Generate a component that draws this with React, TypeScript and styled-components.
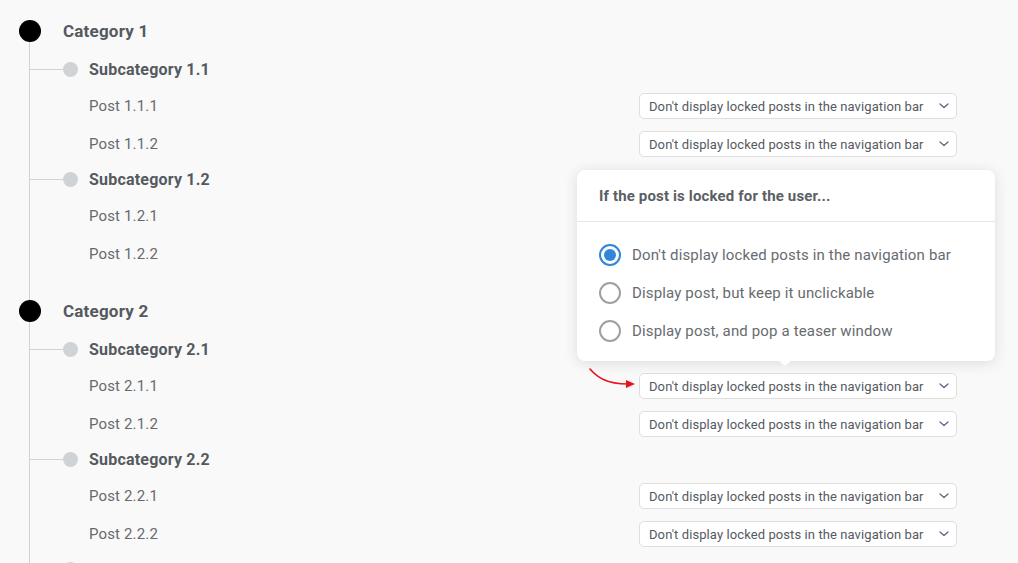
import React from 'react';
import styled, { createGlobalStyle } from 'styled-components';

const GlobalStyle = createGlobalStyle`
  html, body {
    margin: 0;
    padding: 0;
    height: 100%;
    overflow: hidden;
    background: #f9f9f9;
  }
  body {
    font-family: Roboto, 'Liberation Sans', sans-serif;
    color: #555;
  }
`;

const Page = styled.div`
  padding: 10px 61px 0 19px;
`;

const Tree = styled.div`
  position: relative;
  display: flex;
  flex-direction: column;

  &::before {
    content: '';
    position: absolute;
    left: 10px;
    top: 21px;
    bottom: -200px;
    width: 1px;
    background: #cfd1d4;
  }
`;

const CategoryBlock = styled.div`
  display: flex;
  flex-direction: column;
  & + & {
    margin-top: 18px;
  }
`;

const CategoryRow = styled.div`
  display: flex;
  align-items: center;
  gap: 22px;
  height: 42px;
`;

const CategoryDot = styled.span`
  position: relative;
  width: 22px;
  height: 22px;
  border-radius: 50%;
  background: #000;
  flex: none;
`;

const CategoryTitle = styled.span`
  font-size: 17px;
  font-weight: 700;
  letter-spacing: 0.2px;
  color: #555a5f;
`;

const SubRow = styled.div`
  display: flex;
  align-items: center;
  height: 34px;
  margin-left: 10px;
`;

const Connector = styled.span`
  width: 34px;
  height: 1px;
  background: #cfd1d4;
  flex: none;
`;

const SubDot = styled.span`
  width: 15px;
  height: 15px;
  border-radius: 50%;
  background: #d0d3d6;
  flex: none;
  margin-right: 11px;
`;

const SubTitle = styled.span`
  font-size: 16px;
  font-weight: 700;
  letter-spacing: 0.2px;
  color: #555a5f;
`;

const PostRow = styled.div`
  box-sizing: border-box;
  display: flex;
  align-items: center;
  height: 38px;
  padding: 2px 0 0 70px;
`;

const PostTitle = styled.span`
  font-size: 15px;
  letter-spacing: 0.15px;
  color: #666a6e;
`;

const SelectWrap = styled.div`
  position: relative;
  margin-left: auto;
`;

const Select = styled.div`
  box-sizing: border-box;
  width: 318px;
  height: 26px;
  display: flex;
  align-items: center;
  justify-content: space-between;
  padding: 0 7px 0 9px;
  background: #fff;
  border: 1px solid #dedede;
  border-radius: 5px;
  font-size: 13px;
  letter-spacing: 0.09px;
  color: #555a5f;
`;

const Popover = styled.div`
  position: absolute;
  right: -38px;
  bottom: calc(100% + 12px);
  width: 418px;
  background: #fff;
  border-radius: 8px;
  box-shadow: 0 2px 14px rgba(0, 0, 0, 0.12);
  z-index: 2;

  &::after {
    content: '';
    position: absolute;
    left: 202px;
    top: 100%;
    border-left: 6px solid transparent;
    border-right: 6px solid transparent;
    border-top: 5px solid #fff;
  }
`;

const PopoverHeader = styled.div`
  height: 51px;
  display: flex;
  align-items: center;
  padding: 0 22px;
  border-bottom: 1px solid #e6e6e6;
  font-size: 15px;
  font-weight: 700;
  letter-spacing: 0.15px;
  color: #5b5f64;
`;

const OptionList = styled.div`
  padding: 14px 22px 11px;
  display: flex;
  flex-direction: column;
`;

const Option = styled.label`
  display: flex;
  align-items: center;
  gap: 11px;
  height: 38px;
  font-size: 15px;
  letter-spacing: 0.15px;
  color: #676b70;
`;

const Radio = styled.span<{ $checked?: boolean }>`
  box-sizing: border-box;
  width: 22px;
  height: 22px;
  border-radius: 50%;
  border: 2px solid ${(p) => (p.$checked ? '#2f86db' : '#9da1a5')};
  display: flex;
  align-items: center;
  justify-content: center;
  flex: none;

  &::after {
    content: '';
    width: 12px;
    height: 12px;
    border-radius: 50%;
    background: ${(p) => (p.$checked ? '#2f86db' : 'transparent')};
  }
`;

const Pointer = styled.svg`
  position: absolute;
  left: -51px;
  top: -7px;
`;

const LABEL = "Don't display locked posts in the navigation bar";

const options = [
  LABEL,
  'Display post, but keep it unclickable',
  'Display post, and pop a teaser window',
];

function Chevron() {
  return (
    <svg width="14" height="6" viewBox="0 0 14 6" fill="none">
      <path d="M5 1l4 3.6 4-3.6" stroke="#5a6a8a" strokeWidth="1.3" strokeLinecap="round" strokeLinejoin="round" />
    </svg>
  );
}

function PostSelect({ open }: { open?: boolean }) {
  return (
    <SelectWrap>
      {open && (
        <>
          <Popover>
            <PopoverHeader>If the post is locked for the user...</PopoverHeader>
            <OptionList>
              {options.map((o, i) => (
                <Option key={o}>
                  <Radio $checked={i === 0} />
                  {o}
                </Option>
              ))}
            </OptionList>
          </Popover>
          <Pointer width="50" height="24" viewBox="0 0 50 24" fill="none">
            <path d="M2 3 C 9 11, 18 18, 40 18" stroke="#e8131b" strokeWidth="1.6" fill="none" strokeLinecap="round" />
            <polygon points="38,14 47,18 38,22" fill="#e8131b" />
          </Pointer>
        </>
      )}
      <Select>
        <span>{LABEL}</span>
        <Chevron />
      </Select>
    </SelectWrap>
  );
}

interface Sub {
  title: string;
  posts: { title: string; select: boolean; open?: boolean }[];
}

const data: { title: string; subs: Sub[] }[] = [
  {
    title: 'Category 1',
    subs: [
      {
        title: 'Subcategory 1.1',
        posts: [
          { title: 'Post 1.1.1', select: true },
          { title: 'Post 1.1.2', select: true },
        ],
      },
      {
        title: 'Subcategory 1.2',
        posts: [
          { title: 'Post 1.2.1', select: false },
          { title: 'Post 1.2.2', select: false },
        ],
      },
    ],
  },
  {
    title: 'Category 2',
    subs: [
      {
        title: 'Subcategory 2.1',
        posts: [
          { title: 'Post 2.1.1', select: true, open: true },
          { title: 'Post 2.1.2', select: true },
        ],
      },
      {
        title: 'Subcategory 2.2',
        posts: [
          { title: 'Post 2.2.1', select: true },
          { title: 'Post 2.2.2', select: true },
        ],
      },
      {
        title: 'Subcategory 2.3',
        posts: [],
      },
    ],
  },
];

export default function App() {
  return (
    <Page>
      <GlobalStyle />
      <Tree>
        {data.map((cat) => (
          <CategoryBlock key={cat.title}>
            <CategoryRow>
              <CategoryDot />
              <CategoryTitle>{cat.title}</CategoryTitle>
            </CategoryRow>
            {cat.subs.map((sub) => (
              <React.Fragment key={sub.title}>
                <SubRow>
                  <Connector />
                  <SubDot />
                  <SubTitle>{sub.title}</SubTitle>
                </SubRow>
                {sub.posts.map((p) => (
                  <PostRow key={p.title}>
                    <PostTitle>{p.title}</PostTitle>
                    {p.select && <PostSelect open={p.open} />}
                  </PostRow>
                ))}
              </React.Fragment>
            ))}
          </CategoryBlock>
        ))}
      </Tree>
    </Page>
  );
}
